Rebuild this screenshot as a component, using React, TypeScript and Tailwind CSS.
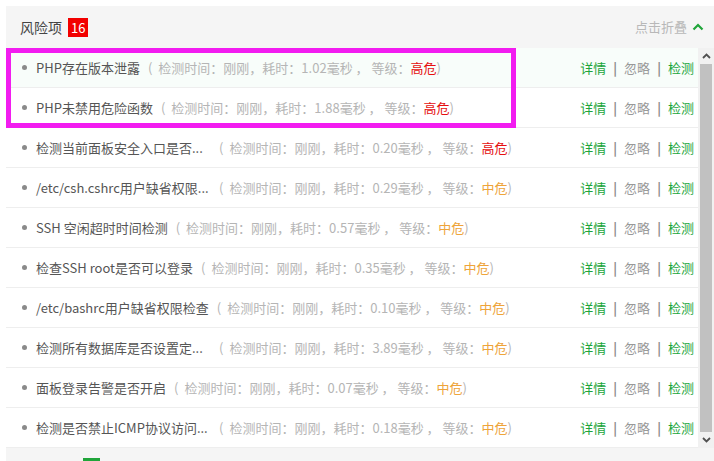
import React from "react";

type Risk = {
  name: string;
  cost: string;
  level: "高危" | "中危";
  cut?: boolean;
};

const risks: Risk[] = [
  { name: "PHP存在版本泄露", cost: "1.02", level: "高危" },
  { name: "PHP未禁用危险函数", cost: "1.88", level: "高危" },
  { name: "检测当前面板安全入口是否...", cost: "0.20", level: "高危", cut: true },
  { name: "/etc/csh.cshrc用户缺省权限...", cost: "0.29", level: "中危", cut: true },
  { name: "SSH 空闲超时时间检测", cost: "0.57", level: "中危" },
  { name: "检查SSH root是否可以登录", cost: "0.35", level: "中危" },
  { name: "/etc/bashrc用户缺省权限检查", cost: "0.10", level: "中危" },
  { name: "检测所有数据库是否设置定...", cost: "3.89", level: "中危", cut: true },
  { name: "面板登录告警是否开启", cost: "0.07", level: "中危" },
  { name: "检测是否禁止ICMP协议访问...", cost: "0.18", level: "中危", cut: true },
];

function RiskRow({ risk, first }: { risk: Risk; first: boolean }) {
  return (
    <div
      className={`flex items-center h-10 pl-[16px] pr-[4px] border-b border-[#eeeeee] ${
        first ? "bg-[#f8fdfa]" : "bg-white"
      }`}
    >
      <span className="w-[5px] h-[5px] rounded-full bg-[#8a8a8a] mr-[9px] shrink-0" />
      <span className={`text-[#555] whitespace-nowrap ${risk.cut ? "w-[175px] shrink-0" : ""}`}>
        {risk.name}
      </span>
      <span className="ml-2 text-[#b5b5b5] whitespace-nowrap">
        (<span className="ml-[6px]">检测时间：刚刚，耗时：{risk.cost}毫秒 ， 等级：</span>
        <span className={risk.level === "高危" ? "text-[#e50f0f]" : "text-[#eea43a]"}>{risk.level}</span>)
      </span>
      <div className="ml-auto flex items-center whitespace-nowrap">
        <span className="text-[#20a53a]">详情</span>
        <span className="text-[#8c8c8c] mx-[7px] font-bold">|</span>
        <span className="text-[#999]">忽略</span>
        <span className="text-[#8c8c8c] mx-[7px] font-bold">|</span>
        <span className="text-[#20a53a]">检测</span>
      </div>
    </div>
  );
}

function ScrollBar() {
  return (
    <div className="w-4 bg-[#f1f1f1] flex flex-col shrink-0">
      <div className="h-4 flex items-center justify-center">
        <svg width="9" height="6" viewBox="0 0 9 6">
          <path d="M1 5 L4.5 1.5 L8 5" fill="none" stroke="#505050" strokeWidth="1.8" />
        </svg>
      </div>
      <div className="flex-1 mx-[2px] bg-[#c1c1c1]" />
      <div className="h-4 flex items-center justify-center">
        <svg width="9" height="6" viewBox="0 0 9 6">
          <path d="M1 1 L4.5 4.5 L8 1" fill="none" stroke="#505050" strokeWidth="1.8" />
        </svg>
      </div>
    </div>
  );
}

export default function App() {
  return (
    <div
      className="w-[714px] h-[461px] bg-white pt-[6px] pl-[6px] overflow-hidden text-[13px]"
      style={{ fontFamily: '"Noto Sans CJK SC", "Noto Sans", sans-serif' }}
    >
      <div className="relative h-full bg-[#f5f5f5]">
        {/* header */}
        <div className="h-[42px] flex items-center pl-[14px] pr-[10px]">
          <span className="text-[14px] text-[#444]">风险项</span>
          <span className="ml-[6px] h-[19px] min-w-[20px] px-[3px] bg-[#f20000] text-white text-[13px] leading-[19px] text-center">
            16
          </span>
          <span className="ml-auto text-[#b8b8b8]">点击折叠</span>
          <svg className="ml-[5px]" width="12" height="8" viewBox="0 0 12 8">
            <path d="M1.5 6.5 L6 2 L10.5 6.5" fill="none" stroke="#20a53a" strokeWidth="2.2" />
          </svg>
        </div>

        {/* list */}
        <div className="flex h-[400px]">
          <div className="flex-1 flex flex-col">
            {risks.map((r, i) => (
              <RiskRow key={r.name} risk={r} first={i === 0} />
            ))}
          </div>
          <ScrollBar />
        </div>

        <div className="ml-[77px] mt-[10px] w-[17px] h-[3px] bg-[#20a53a]" />

        {/* highlight annotation */}
        <div className="absolute left-0 top-[42px] w-[510px] h-[80px] border-[5px] border-[#f21cf0] pointer-events-none" />
      </div>
    </div>
  );
}
